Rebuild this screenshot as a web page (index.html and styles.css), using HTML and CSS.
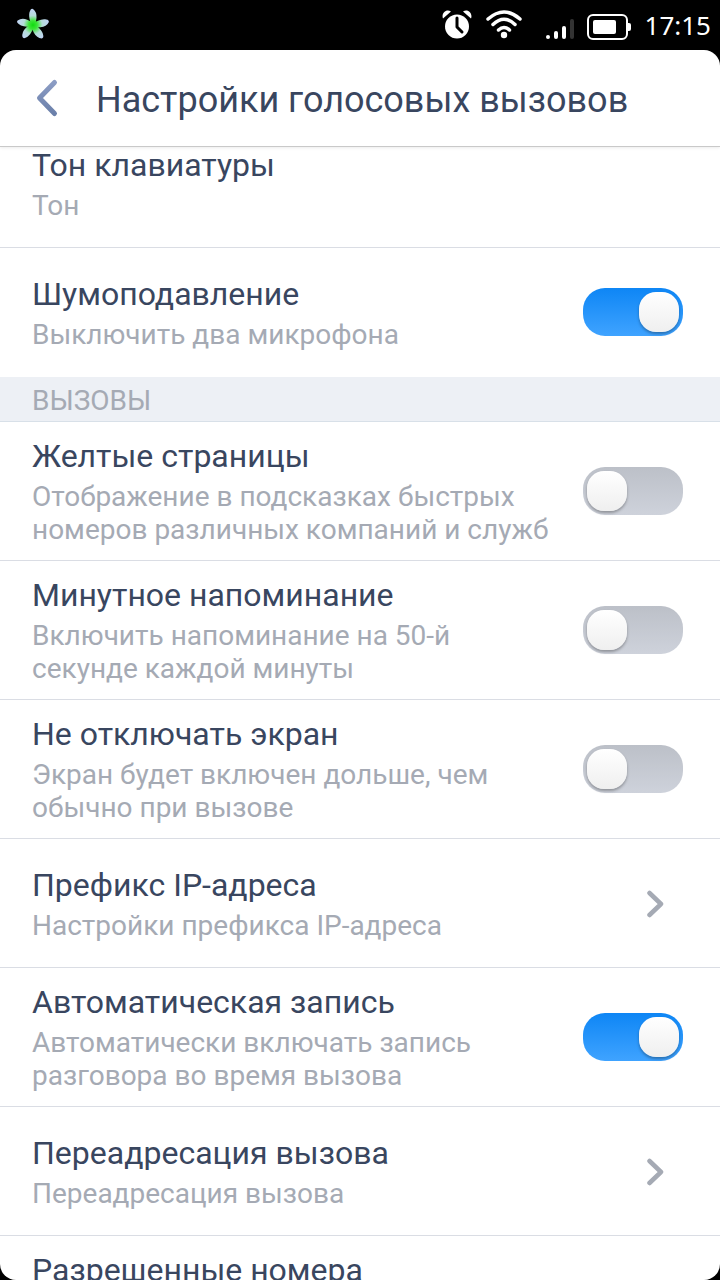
FILE: index.html
```html
<!DOCTYPE html>
<html lang="ru">
<head>
    <meta charset="UTF-8">
    <meta name="viewport" content="width=device-width, initial-scale=1.0">
    <title>Настройки голосовых вызовов</title>
    <link rel="stylesheet" href="styles.css">
</head>
<body>
    <div class="status">
        <svg width="34" height="34" viewBox="0 0 34 34">
            <defs>
                <radialGradient id="petal" gradientUnits="userSpaceOnUse" cx="17" cy="17" r="17">
                    <stop offset="0" stop-color="#0fdc10"/>
                    <stop offset="0.25" stop-color="#3be436"/>
                    <stop offset="0.55" stop-color="#b5dcd8"/>
                    <stop offset="1" stop-color="#c3d3fa"/>
                </radialGradient>
            </defs>
            <g fill="url(#petal)">
                <path id="leaf" d="M15.500 18C14 13 12 7 14 3Q15 0 17 1Q21 4 20.500 10Q20 15 18.500 18Z"/>
                <use href="#leaf" transform="rotate(80 17 17)"/>
                <use href="#leaf" transform="rotate(147 17 17)"/>
                <use href="#leaf" transform="rotate(221 17 17)"/>
                <use href="#leaf" transform="rotate(286 17 17)"/>
            </g>
        </svg>
        <div class="status-right">
            <svg width="30" height="30" viewBox="0 0 30 30">
                <circle cx="15" cy="16.500" r="12" fill="#fff"/>
                <path d="M1 8.500C-1 3.500 4-1.500 9 1.500ZM29 8.500C31 3.500 26-1.500 21 1.500Z" fill="#fff"/>
                <path d="M15 8V17L20 22" fill="none" stroke="#000" stroke-width="3" stroke-linecap="round" stroke-linejoin="round"/>
            </svg>
            <svg class="wifi" width="36" height="30" viewBox="0 0 36 30">
                <g fill="none" stroke="#fff" stroke-width="3.500" stroke-linecap="round">
                    <path d="M2 9Q18-5 34 9"/>
                    <path d="M7 14.500Q18 4 29 14.500"/>
                    <path d="M12.500 20Q18 15 23.500 20"/>
                </g>
                <circle cx="18" cy="25" r="3.200" fill="#fff"/>
            </svg>
            <svg class="signal" width="28" height="30" viewBox="0 0 28 30">
                <g fill="#fff">
                    <rect x="0" y="25" width="4" height="4" rx="2"/>
                    <rect x="8" y="21" width="4" height="8" rx="2"/>
                    <rect x="16" y="16" width="4" height="13" rx="2"/>
                </g>
                <rect x="24" y="9" width="4" height="20" rx="2" fill="#333"/>
            </svg>
            <svg class="battery" width="44" height="30" viewBox="0 0 44 30">
                <rect x="1" y="5" width="39" height="24" rx="5" fill="none" stroke="#fff" stroke-width="2"/>
                <rect x="6" y="10" width="23" height="14" rx="2" fill="#fff"/>
                <path d="M41 13H42Q44 13 44 15V19Q44 21 42 21H41Z" fill="#fff"/>
            </svg>
            <span class="time">17:15</span>
        </div>
    </div>

    <div class="screen">
        <header class="header">
            <button class="back" aria-label="Назад">
                <svg width="24" height="40" viewBox="0 0 24 40">
                    <defs>
                        <linearGradient id="arrow" x1="0" y1="0" x2="0" y2="1">
                            <stop offset="0" stop-color="#8b9cc4"/>
                            <stop offset="1" stop-color="#6b80aa"/>
                        </linearGradient>
                    </defs>
                    <path d="M18.500 4.500L3.500 20L18.500 35.500" fill="none" stroke="url(#arrow)" stroke-width="5" stroke-linecap="round" stroke-linejoin="round"/>
                </svg>
            </button>
            <h1>Настройки голосовых вызовов</h1>
        </header>

        <main class="list">
            <div class="scrolled">
                <a class="row" href="#">
                    <span class="text">
                        <span class="name">Тон клавиатуры</span>
                        <span class="info">Тон</span>
                    </span>
                </a>
                <label class="row last">
                    <span class="text">
                        <span class="name">Шумоподавление</span>
                        <span class="info">Выключить два микрофона</span>
                    </span>
                    <input class="switch" type="checkbox" checked>
                </label>

                <h2 class="section">ВЫЗОВЫ</h2>

                <label class="row">
                    <span class="text">
                        <span class="name">Желтые страницы</span>
                        <span class="info">Отображение в подсказках быстрых номеров различных компаний и служб</span>
                    </span>
                    <input class="switch" type="checkbox">
                </label>
                <label class="row">
                    <span class="text">
                        <span class="name">Минутное напоминание</span>
                        <span class="info">Включить напоминание на 50-й секунде каждой минуты</span>
                    </span>
                    <input class="switch" type="checkbox">
                </label>
                <label class="row">
                    <span class="text">
                        <span class="name">Не отключать экран</span>
                        <span class="info">Экран будет включен дольше, чем обычно при вызове</span>
                    </span>
                    <input class="switch" type="checkbox">
                </label>
                <a class="row" href="#">
                    <span class="text">
                        <span class="name">Префикс IP-адреса</span>
                        <span class="info">Настройки префикса IP-адреса</span>
                    </span>
                    <svg class="chevron" width="18" height="28" viewBox="0 0 18 28">
                        <path d="M3.500 3L15 14L3.500 25" fill="none" stroke="#a5aab4" stroke-width="4.500" stroke-linecap="round" stroke-linejoin="round"/>
                    </svg>
                </a>
                <label class="row">
                    <span class="text">
                        <span class="name">Автоматическая запись</span>
                        <span class="info">Автоматически включать запись разговора во время вызова</span>
                    </span>
                    <input class="switch" type="checkbox" checked>
                </label>
                <a class="row" href="#">
                    <span class="text">
                        <span class="name">Переадресация вызова</span>
                        <span class="info">Переадресация вызова</span>
                    </span>
                    <svg class="chevron" width="18" height="28" viewBox="0 0 18 28">
                        <path d="M3.500 3L15 14L3.500 25" fill="none" stroke="#a5aab4" stroke-width="4.500" stroke-linecap="round" stroke-linejoin="round"/>
                    </svg>
                </a>
                <a class="row tall" href="#">
                    <span class="text">
                        <span class="name">Разрешенные номера</span>
                    </span>
                </a>
            </div>
        </main>
    </div>
</body>
</html>
```

FILE: styles.css
```css
* {
    box-sizing: border-box;
}
body {
    display: flex;
    flex-direction: column;
    height: 100vh;
    margin: 0;
    background-color: #000;
    font-family: Roboto, sans-serif;
    color: #39465f;
}
svg {
    display: block;
    flex: none;
}
.status {
    display: flex;
    flex: none;
    justify-content: space-between;
    align-items: center;
    height: 50px;
    padding: 0 9px 0 16px;
}
.status-right {
    display: flex;
    align-items: center;
}
.wifi {
    margin-left: 14px;
}
.signal {
    margin-left: 24px;
}
.battery {
    margin-left: 13px;
}
.time {
    margin-left: 14px;
    color: #fff;
    font-family: "Noto Sans", sans-serif;
    font-size: 26px;
    line-height: 36px;
}
.screen {
    display: flex;
    flex: 1;
    flex-direction: column;
    min-height: 0;
    overflow: hidden;
    background-color: #fff;
    border-radius: 16px;
}
.header {
    position: relative;
    display: flex;
    flex: none;
    align-items: center;
    gap: 36px;
    height: 97px;
    padding-left: 36px;
    border-bottom: 1px solid #c9c9c9;
    box-shadow: 0 1px 3px rgba(0,0,0,0.08);
}
.back {
    padding: 0;
    border: none;
    background: none;
    cursor: pointer;
}
h1 {
    margin: 0;
    padding-top: 4px;
    font-size: 36px;
    font-weight: 400;
    line-height: 42px;
}
.list {
    flex: 1;
    min-height: 0;
    overflow: hidden;
}
/* list is scrolled a little under the header */
.scrolled {
    margin-top: -28px;
}
.row {
    display: flex;
    align-items: center;
    gap: 24px;
    min-height: 129px;
    padding: 15px 37px 14px 32px;
    border-bottom: 1px solid #dadde4;
    color: inherit;
    text-decoration: none;
    cursor: pointer;
}
.last {
    border-bottom-color: transparent;
}
.tall {
    align-items: flex-start;
}
.text {
    display: flex;
    flex: 1;
    flex-direction: column;
    gap: 5px;
}
.name {
    font-size: 32px;
    line-height: 38px;
}
.info {
    color: #a5aab4;
    font-size: 28px;
    line-height: 33px;
}
.section {
    height: 45px;
    margin: 0;
    padding: 4px 32px 0;
    background-color: #edf0f5;
    border-bottom: 1px solid #d8e0e8;
    color: #a5aab4;
    font-size: 28px;
    font-weight: 400;
    line-height: 40px;
}
.chevron {
    margin-right: 19px;
}
.switch {
    display: flex;
    flex: none;
    align-items: center;
    appearance: none;
    width: 100px;
    height: 48px;
    margin: 0 0 2px;
    padding: 0 4px;
    border-radius: 22px;
    background: linear-gradient(#bcc0c8, #ced2db);
    cursor: pointer;
}
.switch::before {
    content: "";
    width: 40px;
    height: 40px;
    border-radius: 17px;
    background: linear-gradient(#fff, #efefef);
    box-shadow: 0 2px 3px rgba(0,0,0,0.3);
}
.switch:checked {
    justify-content: flex-end;
    background: linear-gradient(#0e86f5, #3fa3ff);
}
```
